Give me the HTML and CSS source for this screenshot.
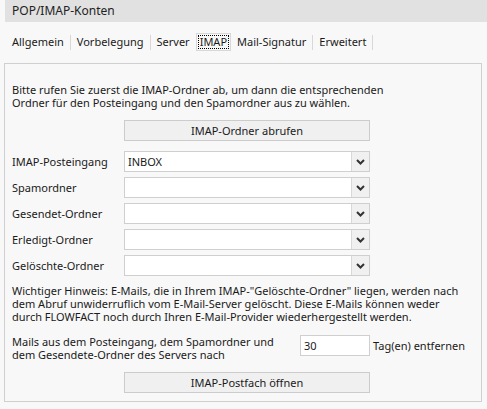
FILE: index.html
```html
<!DOCTYPE html>
<html lang="de">
<head>
<meta charset="utf-8">
<title>POP/IMAP-Konten</title>
<link rel="stylesheet" href="styles.css">
</head>
<body>
<div class="header">POP/IMAP-Konten</div>
<nav class="tabs">
  <span class="tab">Allgemein</span><span class="sep"></span>
  <span class="tab">Vorbelegung</span><span class="sep"></span>
  <span class="tab">Server</span>
  <span class="tab active"><span class="focus">IMAP</span></span>
  <span class="tab">Mail-Signatur</span><span class="sep"></span>
  <span class="tab">Erweitert</span><span class="sep"></span>
</nav>
<section class="panel">
  <p class="intro">Bitte rufen Sie zuerst die IMAP-Ordner ab, um dann die entsprechenden<br>Ordner für den Posteingang und den Spamordner aus zu wählen.</p>
  <div class="btnrow"><button class="btn">IMAP-Ordner abrufen</button></div>
  <div class="rows">
    <div class="row"><span class="label">IMAP-Posteingang</span><div class="select"><span class="value">INBOX</span><span class="arrow"><svg width="9" height="6" viewBox="0 0 9 6"><path d="M1 1 L4.5 4.5 L8 1" fill="none" stroke="#333" stroke-width="2"/></svg></span></div></div>
    <div class="row"><span class="label">Spamordner</span><div class="select"><span class="value"></span><span class="arrow"><svg width="9" height="6" viewBox="0 0 9 6"><path d="M1 1 L4.5 4.5 L8 1" fill="none" stroke="#333" stroke-width="2"/></svg></span></div></div>
    <div class="row"><span class="label">Gesendet-Ordner</span><div class="select"><span class="value"></span><span class="arrow"><svg width="9" height="6" viewBox="0 0 9 6"><path d="M1 1 L4.5 4.5 L8 1" fill="none" stroke="#333" stroke-width="2"/></svg></span></div></div>
    <div class="row"><span class="label">Erledigt-Ordner</span><div class="select"><span class="value"></span><span class="arrow"><svg width="9" height="6" viewBox="0 0 9 6"><path d="M1 1 L4.5 4.5 L8 1" fill="none" stroke="#333" stroke-width="2"/></svg></span></div></div>
    <div class="row"><span class="label">Gelöschte-Ordner</span><div class="select"><span class="value"></span><span class="arrow"><svg width="9" height="6" viewBox="0 0 9 6"><path d="M1 1 L4.5 4.5 L8 1" fill="none" stroke="#333" stroke-width="2"/></svg></span></div></div>
  </div>
  <p class="note">Wichtiger Hinweis: E-Mails, die in Ihrem IMAP-"Gelöschte-Ordner" liegen, werden nach<br>dem Abruf unwiderruflich vom E-Mail-Server gelöscht. Diese E-Mails können weder<br>durch FLOWFACT noch durch Ihren E-Mail-Provider wiederhergestellt werden.</p>
  <div class="days">
    <span class="daystext">Mails aus dem Posteingang, dem Spamordner und<br>dem Gesendete-Ordner des Servers nach</span>
    <span class="num">30</span>
    <span class="unit">Tag(en) entfernen</span>
  </div>
  <div class="btnrow last"><button class="btn">IMAP-Postfach öffnen</button></div>
</section>
</body>
</html>
```
FILE: styles.css
```css
html, body {
  margin: 0;
  padding: 0;
  background: #f8f8f8;
}
body {
  font-family: "Noto Sans", "Open Sans", sans-serif;
  font-size: 11px;
  color: #1a1a1a;
  width: 487px;
  height: 409px;
  overflow: hidden;
}
.header {
  margin-left: 5px;
  height: 22px;
  line-height: 22px;
  background: #e1e1e1;
  padding-left: 7px;
  color: #222;
  font-size: 12px;
}
.tabs {
  display: flex;
  align-items: center;
  height: 18px;
  margin-top: 11px;
  padding-left: 12px;
}
.tab {
  line-height: 18px;
  white-space: nowrap;
}
.sep {
  width: 1px;
  height: 15px;
  background: #d8d8d8;
  margin: 0 6px;
}
.tab + .tab { margin-left: 6px; }
.tab.active {
  border: 1px solid #d8d8d8;
  padding: 1px;
  line-height: 12px;
}
.focus {
  display: block;
  border: 1px dotted #000;
  padding: 0 1px;
}
.panel {
  margin: 12px 0 0 4px;
  width: 469px;
  height: 337px;
  border: 1px solid #d0d0d0;
  padding: 0 0 0 7px;
  background: #f8f8f8;
}
.panel .text {
  margin: 0;
}
.intro, .note {
  margin: 0;
  line-height: 13px;
  white-space: nowrap;
}
.intro { padding-top: 19px; }
.note { margin-top: 8px; }
.btnrow {
  margin-top: 11px;
  padding-left: 112px;
}
.btn {
  display: block;
  width: 246px;
  height: 21px;
  background: #f0f0f0;
  border: 1px solid #cccccc;
  font: inherit;
  color: #1a1a1a;
  padding: 0;
}
.rows {
  margin-top: 10px;
  display: flex;
  flex-direction: column;
  gap: 5px;
}
.row {
  display: flex;
  align-items: center;
  height: 21px;
}
.label { width: 112px; }
.select {
  display: flex;
  width: 246px;
  height: 21px;
  box-sizing: border-box;
  border: 1px solid #cfcfcf;
  background: #fff;
}
.value {
  flex: 1;
  padding-left: 3px;
  line-height: 19px;
}
.arrow {
  width: 17px;
  border-left: 1px solid #d8d8d8;
  background: #f0f0f0;
  display: flex;
  align-items: center;
  justify-content: center;
}
.days {
  margin-top: 12px;
  display: flex;
  align-items: flex-start;
}
.daystext {
  width: 281px;
  line-height: 13px;
  white-space: nowrap;
}
.num {
  margin-left: 7px;
  width: 70px;
  height: 21px;
  box-sizing: border-box;
  border: 1px solid #cfcfcf;
  background: #fff;
  padding-left: 3px;
  line-height: 19px;
}
.unit {
  margin-left: 3px;
  line-height: 21px;
}
.btnrow.last { margin-top: 11px; }
```
